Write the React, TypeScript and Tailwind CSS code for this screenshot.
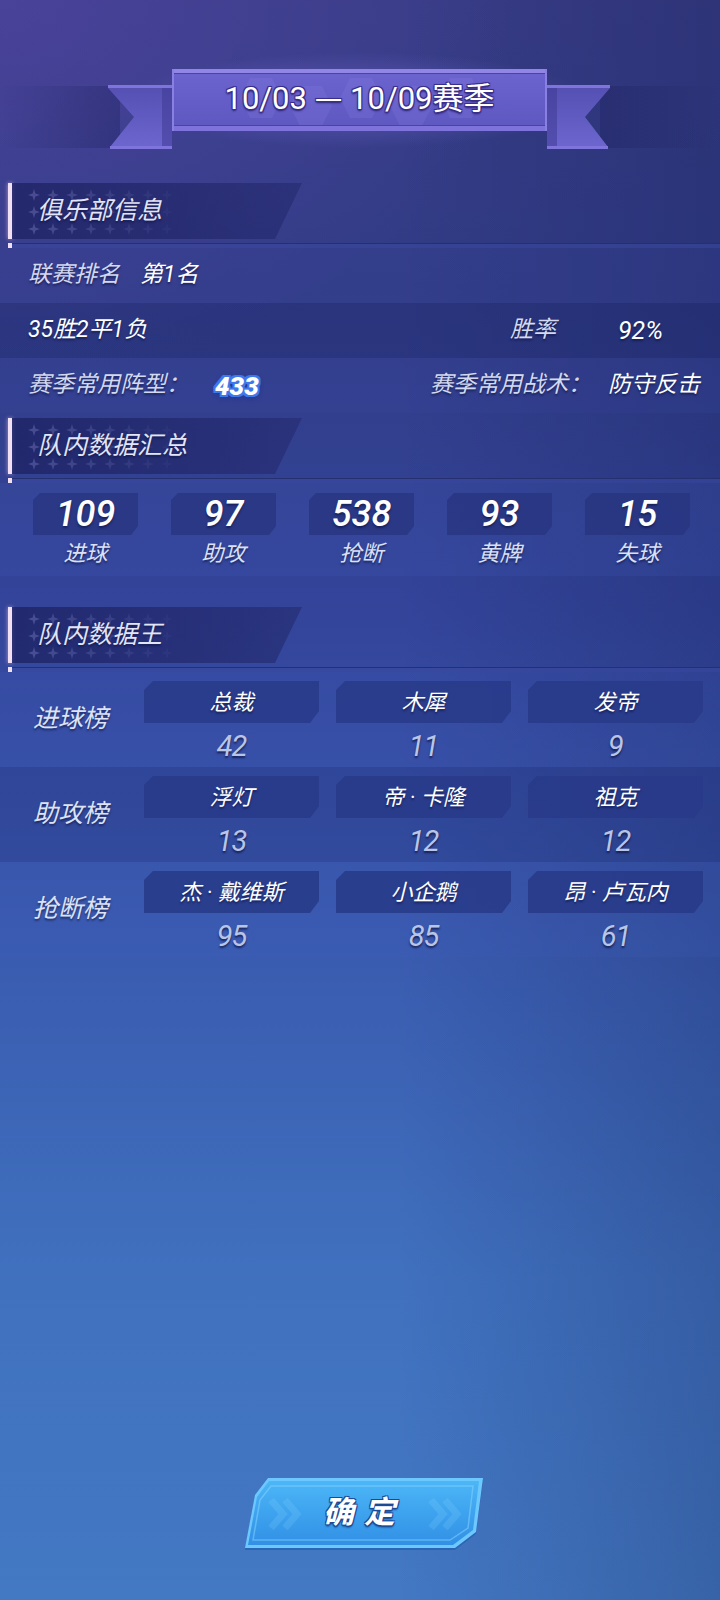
import React from "react"

const shadow = "[text-shadow:0_2px_2px_rgba(10,16,60,0.55)]"

function Sparkles() {
  const cols = [22, 41, 60, 79, 98, 117, 136, 155]
  const rows = [12, 29, 46]
  return (
    <svg className="absolute left-0 top-0" width="180" height="56" viewBox="0 0 180 56">
      {rows.map((y, ri) =>
        cols.map((x, ci) => (
          <path
            key={ri + "-" + ci}
            d={`M${x - 6} ${y} L${x - 1.4} ${y - 1.4} L${x} ${y - 6} L${x + 1.4} ${y - 1.4} L${x + 6} ${y} L${x + 1.4} ${y + 1.4} L${x} ${y + 6} L${x - 1.4} ${y + 1.4} Z`}
            fill="#9aa0e0"
            opacity={Math.max(0.04, 0.3 - ci * 0.035)}
          />
        ))
      )}
    </svg>
  )
}

function SectionHeader({ title }: { title: string }) {
  return (
    <div className="flex flex-col">
      <div className="flex h-[56px]">
        <div className="ml-[8px] w-[4px] bg-[#f1dff3] shadow-[0_0_4px_rgba(240,200,240,0.7)]" />
        <div className="relative flex w-[290px] items-center bg-[linear-gradient(90deg,rgba(28,32,96,0.75),rgba(36,42,110,0.6))] pl-[25px] [clip-path:polygon(0_0,100%_0,calc(100%-27px)_100%,0_100%)]">
          <Sparkles />
          <span className={`relative text-[25px] italic text-[#e2e5f6] ${shadow}`}>{title}</span>
        </div>
      </div>
      <div className="mt-[4px] flex h-[5px]">
        <div className="ml-[8px] w-[4px] bg-[#f1dff3]" />
        <div className="flex-1 border-t border-[#253070] bg-[#3a4aa0]/60" />
      </div>
    </div>
  )
}

function Ribbon() {
  const hexes = [250, 300, 350, 400, 450]
  return (
    <svg className="absolute left-0 top-0" width="720" height="152" viewBox="0 0 720 152">
      <defs>
        <linearGradient id="bandL" x1="0" x2="1" y1="0" y2="0">
          <stop offset="0" stopColor="#1c1f5c" stopOpacity="0" />
          <stop offset="1" stopColor="#1c1f5c" stopOpacity="0.35" />
        </linearGradient>
        <linearGradient id="bandR" x1="1" x2="0" y1="0" y2="0">
          <stop offset="0" stopColor="#1c1f5c" stopOpacity="0" />
          <stop offset="1" stopColor="#1c1f5c" stopOpacity="0.35" />
        </linearGradient>
        <linearGradient id="tail" x1="0" x2="0" y1="0" y2="1">
          <stop offset="0" stopColor="#5550b2" />
          <stop offset="1" stopColor="#6c66cf" />
        </linearGradient>
        <linearGradient id="plate" x1="0" x2="0" y1="0" y2="1">
          <stop offset="0" stopColor="#6c64cf" />
          <stop offset="1" stopColor="#5d57c0" />
        </linearGradient>
        <radialGradient id="glow" cx="0.5" cy="0.5" r="0.5">
          <stop offset="0" stopColor="#8e7ef0" stopOpacity="0.4" />
          <stop offset="1" stopColor="#8e7ef0" stopOpacity="0" />
        </radialGradient>
      </defs>
      <rect x="0" y="86" width="120" height="62" fill="url(#bandL)" />
      <rect x="600" y="86" width="120" height="62" fill="url(#bandR)" />
      <ellipse cx="359" cy="100" rx="230" ry="48" fill="url(#glow)" />
      <polygon points="108,88 172,88 172,147 110,147 134,117" fill="url(#tail)" />
      <rect x="108" y="85" width="64" height="3" fill="#7e74dc" />
      <rect x="110" y="146" width="62" height="3" fill="#7e74dc" />
      <rect x="162" y="88" width="10" height="58" fill="#3c3890" opacity="0.5" />
      <polygon points="610,88 547,88 547,147 608,147 585,117" fill="url(#tail)" />
      <rect x="547" y="85" width="63" height="3" fill="#7e74dc" />
      <rect x="547" y="146" width="61" height="3" fill="#7e74dc" />
      <rect x="547" y="88" width="10" height="58" fill="#3c3890" opacity="0.5" />
      <rect x="172" y="69" width="375" height="62" fill="url(#plate)" />
      {hexes.map((x, i) => (
        <polygon
          key={x}
          points={`${x},${78 + (i % 2) * 8} ${x + 22},${78 + (i % 2) * 8} ${x + 32},${98 + (i % 2) * 8} ${x + 22},${118 + (i % 2) * 8} ${x},${118 + (i % 2) * 8} ${x - 10},${98 + (i % 2) * 8}`}
          fill="#a49af4"
          opacity="0.12"
        />
      ))}
      <rect x="172" y="69" width="375" height="4" fill="#9186e6" />
      <rect x="172" y="73" width="375" height="1" fill="#4a44a6" />
      <rect x="172" y="125" width="375" height="1" fill="#4a44a6" />
      <rect x="172" y="126" width="375" height="5" fill="#7d73da" />
      <rect x="172" y="69" width="2" height="62" fill="#8a80e2" />
      <rect x="545" y="69" width="2" height="62" fill="#8a80e2" />
    </svg>
  )
}

function StatBox({ value, label }: { value: string; label: string }) {
  return (
    <div className="flex w-[105px] flex-col items-center">
      <div className="flex h-[42px] w-full items-center justify-center bg-[#283580]/80 [clip-path:polygon(7px_0,100%_0,100%_calc(100%-9px),calc(100%-7px)_100%,0_100%,0_7px)]">
        <span className={`font-['Roboto'] text-[36px] font-medium italic leading-none text-white ${shadow}`}>{value}</span>
      </div>
      <span className={`mt-[6px] text-[22px] italic leading-[26px] text-[#dbe0f4] ${shadow}`}>{label}</span>
    </div>
  )
}

function Leader({ name, value }: { name: string; value: string }) {
  return (
    <div className="flex w-[175px] flex-col items-center">
      <div className="flex h-[42px] w-full items-center justify-center bg-[#283a88]/85 [clip-path:polygon(9px_0,100%_0,100%_calc(100%-12px),calc(100%-9px)_100%,0_100%,0_9px)]">
        <span className={`text-[22px] italic text-white ${shadow}`}>{name}</span>
      </div>
      <span className={`mt-[6px] font-['Roboto'] text-[29px] italic leading-[34px] tracking-[-1px] text-[#b9c5e6] [text-shadow:0_2px_2px_rgba(10,16,60,0.7)]`}>{value}</span>
    </div>
  )
}

function LeaderRow({ title, items, dark }: { title: string; items: [string, string][]; dark?: boolean }) {
  return (
    <div className={`flex h-[95px] items-start pt-[9px] ${dark ? "bg-[#1e2c78]/25" : "bg-[#4660c0]/15"}`}>
      <div className="flex h-[76px] w-[144px] items-center pl-[33px]">
        <span className={`text-[25px] italic text-[#dde2f4] ${shadow}`}>{title}</span>
      </div>
      <div className="flex gap-[17px]">
        {items.map(([n, v]) => (
          <Leader key={n} name={n} value={v} />
        ))}
      </div>
    </div>
  )
}

export default function App() {
  const label = `text-[23px] italic text-[#d3d9ef] ${shadow}`
  const value = `text-[23px] italic text-white ${shadow}`
  return (
    <div className="flex min-h-[1600px] w-[720px] flex-col font-['Roboto','Noto_Sans_CJK_SC',sans-serif] bg-[radial-gradient(ellipse_520px_380px_at_0%_0%,rgba(88,72,170,0.55),transparent),linear-gradient(90deg,transparent_55%,rgba(14,22,70,0.22)_100%),linear-gradient(180deg,#383c86_0%,#313c86_18%,#33449a_38%,#3a5cb0_60%,#4071bf_80%,#4378c3_100%)]">
      {/* season ribbon */}
      <div className="relative h-[152px] w-full">
        <Ribbon />
        <div className="absolute left-[172px] top-[69px] flex h-[57px] w-[375px] items-center justify-center">
          <span className="text-[31px] text-white [text-shadow:0_0_2px_#3a2f8a,1px_1px_0_#3a2f8a,-1px_-1px_0_#3a2f8a,1px_-1px_0_#3a2f8a,-1px_1px_0_#3a2f8a,0_2px_2px_#2a2270]">
            10/03 <span className="font-['Noto_Sans_CJK_SC',sans-serif]">—</span> 10/09赛季
          </span>
        </div>
      </div>

      <div className="mt-[31px]">
        <SectionHeader title="俱乐部信息" />
      </div>
      <div className="flex h-[55px] items-center px-[28px] bg-[#3a46a0]/20">
        <span className={label}>联赛排名</span>
        <span className={`ml-[20px] ${value}`}>第1名</span>
      </div>
      <div className="flex h-[55px] items-center pl-[28px] pr-[57px] bg-[#1c2468]/30">
        <span className={value}>35胜2平1负</span>
        <div className="flex-1" />
        <span className={label}>胜率</span>
        <span className={`ml-[62px] font-['Roboto'] text-[25px] italic text-white ${shadow}`}>92%</span>
      </div>
      <div className="flex h-[55px] items-center pl-[28px] pr-[20px] bg-[#3a46a0]/20">
        <span className={label}>赛季常用阵型：</span>
        <span className="ml-[26px] font-['Roboto'] text-[26px] font-black italic leading-none text-white [text-shadow:2px_0_0_#3e78ea,-2px_0_0_#3e78ea,0_2px_0_#3e78ea,0_-2px_0_#3e78ea,2px_2px_0_#3e78ea,-2px_-2px_0_#3e78ea,2px_-2px_0_#3e78ea,-2px_2px_0_#3e78ea,0_0_5px_#1c3a9c,0_3px_4px_#1c3a9c]">
          433
        </span>
        <div className="flex-1" />
        <span className={label}>赛季常用战术：</span>
        <span className={`ml-[17px] ${value}`}>防守反击</span>
      </div>

      <div className="mt-[5px]">
        <SectionHeader title="队内数据汇总" />
      </div>
      <div className="flex h-[93px] gap-[33px] bg-[#4058b8]/20 pl-[33px] pt-[10px]">
        <StatBox value="109" label="进球" />
        <StatBox value="97" label="助攻" />
        <StatBox value="538" label="抢断" />
        <StatBox value="93" label="黄牌" />
        <StatBox value="15" label="失球" />
      </div>

      <div className="mt-[31px]">
        <SectionHeader title="队内数据王" />
      </div>
      <LeaderRow title="进球榜" items={[["总裁", "42"], ["木犀", "11"], ["发帝", "9"]]} />
      <LeaderRow title="助攻榜" dark items={[["浮灯", "13"], ["帝 · 卡隆", "12"], ["祖克", "12"]]} />
      <LeaderRow title="抢断榜" items={[["杰 · 戴维斯", "95"], ["小企鹅", "85"], ["昂 · 卢瓦内", "61"]]} />

      <div className="flex-1" />

      {/* confirm button */}
      <div className="mb-[52px] flex justify-center pl-[8px]">
        <button className="relative h-[70px] w-[238px]">
          <svg className="absolute left-0 top-0" width="238" height="72" viewBox="0 0 238 72">
            <defs>
              <linearGradient id="btn" x1="0" x2="0" y1="0" y2="1">
                <stop offset="0" stopColor="#4cb6f7" />
                <stop offset="1" stopColor="#3190e6" />
              </linearGradient>
            </defs>
            <polygon points="0,72 10,19 23,2 238,2 231,56 210,72" fill="#1f5fb0" opacity="0.7" />
            <polygon points="0,70 10,17 23,0 238,0 231,54 210,70" fill="#6cc8ff" />
            <polygon points="3,67 12,19 24,3 234,3 228,52 208,67" fill="url(#btn)" />
            <polygon points="8,62 15,22 26,8 228,8 223,50 205,62" fill="none" stroke="#8ad6ff" strokeOpacity="0.5" strokeWidth="1.5" />
            <path d="M26 22 L38 36 L26 50 M40 22 L52 36 L40 50" stroke="#8ad8ff" strokeOpacity="0.18" strokeWidth="7" fill="none" />
            <path d="M186 22 L198 36 L186 50 M200 22 L212 36 L200 50" stroke="#8ad8ff" strokeOpacity="0.18" strokeWidth="7" fill="none" />
          </svg>
          <span className="relative flex h-full items-center justify-center text-[31px] font-bold italic tracking-[10px] text-white [text-shadow:1px_1px_0_#1b4a96,-1px_-1px_0_#1b4a96,1px_-1px_0_#1b4a96,-1px_1px_0_#1b4a96,0_2px_2px_#163e80]">
            确定
          </span>
        </button>
      </div>
    </div>
  )
}
